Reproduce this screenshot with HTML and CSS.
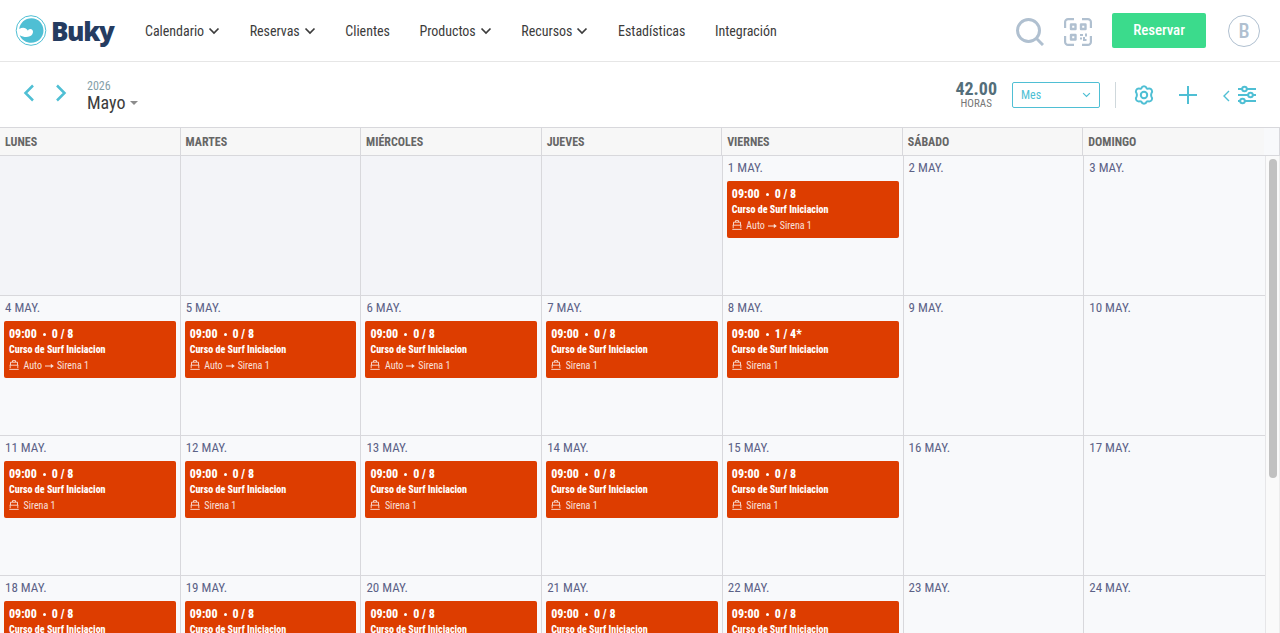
FILE: index.html
```html
<!DOCTYPE html>
<html lang="es">
<head>
    <meta charset="UTF-8">
    <meta name="viewport" content="width=device-width, initial-scale=1.0">
    <title>Buky - Calendario</title>
    <link rel="stylesheet" href="styles.css">
</head>
<body>

    <!-- Iconos compartidos -->
    <svg class="sprite">
        <symbol id="chevron" viewBox="0 0 12 8"><path d="M1.500 1.500 6 6l4.500-4.500" fill="none" stroke="currentColor" stroke-width="1.700"/></symbol>
        <symbol id="boat" viewBox="0 0 10 10">
            <path d="M3.500 2V.6h3V2M1.500 5V2.200h7V5M.7 5.200h8.600M1.200 5.200v3M8.800 5.200v3M.3 9.400h9.400" fill="none" stroke="currentColor" stroke-width=".9"/>
        </symbol>
        <symbol id="arrow" viewBox="0 0 9 6"><path d="M0 3h7" stroke="currentColor"/><path d="M5.800.8 8.800 3 5.800 5.200z" fill="currentColor"/></symbol>
    </svg>

    <header class="navbar">
        <a class="logo">
            <svg width="32" height="32" viewBox="0 0 32 32">
                <circle cx="16" cy="15.500" r="14.800" fill="none" stroke="#4fbfd4" stroke-width="1"/>
                <path d="M4.200 14C5 8 10 3.300 16.500 3.300c6.800 0 12 5.500 12 12.200S23.200 27.800 16.200 27.800c-5 0-9.700-3-11.500-7.600 4.500 2.600 10.500 2.300 12.600-.9 1.500-2.300.6-5-1.800-5.200-1.500-.1-2.300.7-2.500 1.700C11 12.300 7.500 11.800 4.200 14z" fill="#4fbfd4"/>
            </svg>
            <span class="logo-text">Buky</span>
        </a>
        <nav class="menu">
            <a>Calendario <svg class="chevron"><use href="#chevron"/></svg></a>
            <a>Reservas <svg class="chevron"><use href="#chevron"/></svg></a>
            <a>Clientes</a>
            <a>Productos <svg class="chevron"><use href="#chevron"/></svg></a>
            <a>Recursos <svg class="chevron"><use href="#chevron"/></svg></a>
            <a>Estadísticas</a>
            <a>Integración</a>
        </nav>
        <div class="actions">
            <svg class="search" width="28" height="28" viewBox="0 0 28 28" fill="none" stroke="currentColor" stroke-width="3">
                <circle cx="12.500" cy="12.500" r="11"/><path d="m20.500 20.500 6.500 6.500"/>
            </svg>
            <svg class="qr" width="28" height="28" viewBox="0 0 28 28" fill="none" stroke="currentColor" stroke-width="2.200">
                <path d="M1.100 10V4.100a3 3 0 0 1 3-3H10M18 1.100h5.900a3 3 0 0 1 3 3V10M26.900 18v5.900a3 3 0 0 1-3 3H18M10 26.900H4.100a3 3 0 0 1-3-3V18"/>
                <path d="M7 6.500h4.500V11H7zM17 6.500h4.500V11H17zM7 17h4.500v4.500H7z" stroke-width="2.400" stroke-linejoin="round"/>
                <path d="M16 17h3M22 15.500v3M17 21.500v-2M19 22h3.500M20 19v2" stroke-width="2"/>
            </svg>
            <button class="book">Reservar</button>
            <span class="avatar">B</span>
        </div>
    </header>

    <div class="toolbar">
        <div class="arrows">
            <svg width="12" height="18" viewBox="0 0 12 18"><path d="M10 1.500 2.500 9l7.500 7.500"/></svg>
            <svg width="12" height="18" viewBox="0 0 12 18"><path d="M2 1.500 9.500 9 2 16.500"/></svg>
        </div>
        <div class="period">
            <span class="year">2026</span>
            <span class="month">Mayo <i class="caret"></i></span>
        </div>
        <div class="hours">
            <strong>42.00</strong>
            <span>HORAS</span>
        </div>
        <div class="view-select">Mes <svg width="9" height="6" viewBox="0 0 12 8"><path d="M1.500 1.500 6 6l4.500-4.500" fill="none" stroke="currentColor" stroke-width="1.600"/></svg></div>
        <div class="tools">
            <svg width="20" height="20" viewBox="0 0 20 20">
                <path d="M7.300 3.300Q8 1.300 10 1.300t2.700 2q.9.600 2 .3 2.200-.2 3.100 1.500t-.4 3.200q-.7 1.700 0 3.400 1.300 1.500.4 3.200t-3.100 1.500q-1.100-.3-2 .3-.7 2-2.700 2t-2.700-2q-.9-.6-2-.3-2.200.2-3.100-1.500t.4-3.200q.7-1.700 0-3.400-1.300-1.500-.4-3.200t3.100-1.500q1.100.3 2-.3z"/>
                <circle cx="10" cy="10" r="3.200"/>
            </svg>
            <svg width="18" height="18" viewBox="0 0 18 18"><path d="M9 0v18M0 9h18"/></svg>
            <svg class="filter" width="33" height="20" viewBox="0 0 33 20">
                <path d="M6 6 1 11l5 5" stroke-width="1.400"/>
                <path d="M15 4h4M24 4h9M15 10h10M30 10h3M15 16h2M22 16h11"/>
                <circle cx="21.500" cy="4" r="2.300"/><circle cx="27.500" cy="10" r="2.300"/><circle cx="19.500" cy="16" r="2.300"/>
            </svg>
        </div>
    </div>

    <div class="weekdays">
        <div>LUNES</div>
        <div>MARTES</div>
        <div>MIÉRCOLES</div>
        <div>JUEVES</div>
        <div>VIERNES</div>
        <div>SÁBADO</div>
        <div>DOMINGO</div>
    </div>

    <main class="calendar">
        <div class="days" id="days"></div>
        <div class="scrollbar"><div class="thumb"></div></div>
    </main>

    <script>
        const days = document.getElementById('days');
        const boat = '<svg class="boat"><use href="#boat"/></svg>';
        const arrow = '<svg class="arrow"><use href="#arrow"/></svg>';

        // Cursos asignados automaticamente
        const auto = [1, 4, 5, 6];
        const places = { 8: '1 / 4*' };

        // Mayo empieza en viernes
        for (let i = -3; i <= 24; i++) {
            const day = document.createElement('div');
            day.className = 'day';

            if (i < 1) {
                day.classList.add('disabled');
                days.appendChild(day);
                continue;
            }

            day.innerHTML = `<div class="date">${i} MAY.</div>`;

            // Solo hay cursos de lunes a viernes
            if ((i + 3) % 7 < 5) {
                day.innerHTML += `
                    <div class="event">
                        <div class="time">09:00 <i class="dot"></i> ${places[i] || '0 / 8'}</div>
                        <div class="name">Curso de Surf Iniciacion</div>
                        <div class="resource">${boat}${auto.includes(i) ? 'Auto ' + arrow : ''}Sirena 1</div>
                    </div>`;
            }
            days.appendChild(day);
        }
    </script>

</body>
</html>
```
FILE: styles.css
```css
* {
    box-sizing: border-box;
}

body {
    margin: 0;
    height: 100vh;
    display: flex;
    flex-direction: column;
    overflow: hidden;
    background: #fff;
    color: #3c3c3c;
    font-family: 'Roboto Condensed', Roboto, sans-serif;
    font-stretch: 75%;
}

svg {
    flex: none;
}

.sprite {
    display: none;
}

/* Cabecera */
.navbar {
    flex: none;
    height: 62px;
    display: flex;
    align-items: center;
    padding: 0 20px 0 15px;
    border-bottom: 1px solid #e6e6e6;
}

.logo {
    display: flex;
    align-items: center;
    width: 130px;
    gap: 4px;
}

.logo-text {
    font-family: 'Open Sans', sans-serif;
    font-stretch: normal;
    font-size: 26px;
    font-weight: 800;
    letter-spacing: -1.4px;
    color: #253c61;
}

.menu {
    display: flex;
    gap: 29.6px;
    font-size: 14px;
    font-weight: 450;
}

.menu a {
    display: flex;
    align-items: center;
    gap: 4px;
    letter-spacing: -0.03px;
}

.chevron {
    width: 12px;
    height: 8px;
}

.actions {
    display: flex;
    align-items: center;
    margin-left: auto;
    color: #b0c0d0;
}

.search {
    margin: 2px 20px 0 0;
}

.qr {
    margin: 2px 20px 0 0;
}

.book {
    width: 94px;
    height: 35px;
    margin-right: 22px;
    padding: 0 0 1px;
    border: 0;
    border-radius: 2px;
    background: #3bdb8c;
    color: #fff;
    font-family: inherit;
    font-stretch: inherit;
    font-size: 15px;
    font-weight: 500;
    letter-spacing: -0.1px;
}

.avatar {
    width: 32px;
    height: 32px;
    border: 1px solid #b0c0d0;
    border-radius: 50%;
    line-height: 31px;
    text-align: center;
    font-size: 20px;
    font-weight: 500;
}

/* Barra del calendario */
.toolbar {
    flex: none;
    height: 65px;
    display: flex;
    align-items: center;
    padding: 0 24px 0 23px;
}

.arrows {
    display: flex;
    gap: 20px;
    width: 64px;
    padding-bottom: 4px;
}

.arrows path {
    fill: none;
    stroke: #4fbfd4;
    stroke-width: 2.5;
}

.period {
    display: flex;
    flex-direction: column;
    padding-top: 2px;
}

.year {
    font-size: 12px;
    line-height: 14px;
    color: #84a0a8;
}

.month {
    display: flex;
    align-items: center;
    gap: 4px;
    font-size: 18px;
    line-height: 20px;
}

.caret {
    border: 4px solid transparent;
    border-top-color: #8c8c8c;
    border-bottom: 0;
}

.hours {
    display: flex;
    flex-direction: column;
    align-items: center;
    margin-left: auto;
    padding-bottom: 1px;
    font-size: 11px;
    line-height: 12px;
    color: #777;
}

.hours strong {
    font-size: 18px;
    line-height: 19px;
    color: #546e7a;
}

.view-select {
    display: flex;
    align-items: center;
    justify-content: space-between;
    width: 88px;
    height: 26px;
    margin: 0 15px;
    padding: 0 8px;
    border: 1px solid #4fbfd4;
    border-radius: 2px;
    color: #4fbfd4;
    font-size: 12px;
    font-weight: 450;
}

.tools {
    display: flex;
    align-items: center;
    gap: 25px;
    height: 26px;
    padding-left: 18px;
    border-left: 1px solid #cfd8dc;
}

.tools svg {
    fill: none;
    stroke: #4fbfd4;
    stroke-width: 2;
}

.tools .filter {
    margin-left: 1px;
}

/* Dias de la semana */
.weekdays {
    flex: none;
    height: 29px;
    display: grid;
    grid-template-columns: repeat(7, 180.55px);
    grid-template-rows: 27px;
    border-top: 1px solid #d8d8dc;
    border-right: 1px solid #d8d8dc;
    border-bottom: 1px solid #d8d8dc;
    background: #f8f9fb;
    font-size: 12px;
    font-weight: 700;
    line-height: 28px;
    color: #666;
}

.weekdays div {
    padding-left: 5px;
    border-right: 1px solid #d8d8dc;
    background: #f7f7f7;
}

.weekdays div:last-child {
    border-right: 0;
}

/* Mes */
.calendar {
    flex: 1;
    display: flex;
    min-height: 0;
}

.days {
    width: 1265px;
    display: grid;
    grid-template-columns: repeat(7, 1fr);
    grid-auto-rows: 140px;
}

.day {
    padding: 0 4px;
    border-right: 1px solid #d8d8dc;
    border-bottom: 1px solid #d8d8dc;
    background: #f8f9fb;
}

.day:nth-child(7n) {
    border-right: 0;
}

.disabled {
    background: #f3f4f8;
}

.date {
    height: 25px;
    padding-left: 1px;
    font-size: 13px;
    line-height: 24px;
    color: #5c6287;
}

.event {
    height: 57px;
    padding: 5px;
    border-radius: 2px;
    background: #dd3d00;
    color: #fff;
    line-height: 16px;
    white-space: nowrap;
}

.time {
    display: flex;
    align-items: center;
    height: 16px;
    font-size: 12px;
    font-weight: 800;
}

.dot {
    width: 3px;
    height: 3px;
    margin: 0 6px;
    border-radius: 50%;
    background: #fff;
}

.name {
    font-size: 10px;
    font-weight: 800;
    line-height: 15px;
}

.resource {
    display: flex;
    align-items: center;
    padding-top: 1px;
    font-size: 10px;
    opacity: 0.85;
}

.boat {
    width: 10px;
    height: 10px;
    margin: 0 4.5px 2px 0;
}

.arrow {
    width: 9px;
    height: 6px;
    margin: 0 3px;
}

.scrollbar {
    flex: 1;
    padding: 3px 2px 0 3px;
    border-left: 1px solid #e6e6e8;
    border-right: 1px solid #ececec;
    background: #fafafa;
}

.thumb {
    width: 8px;
    height: 319px;
    border-radius: 4px;
    background: #c1c1c1;
}
```
